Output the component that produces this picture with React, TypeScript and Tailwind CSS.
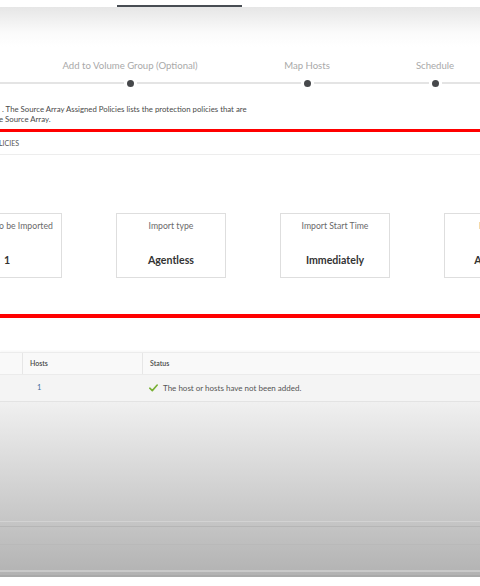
import type { ReactNode } from "react";

const STEPS = [
  { label: "Add to Volume Group (Optional)", width: "w-[180px]" },
  { label: "Map Hosts", width: "w-[174px]" },
  { label: "Schedule", width: "w-[82px]" },
];

const SUMMARY = [
  { title: "Volumes to be Imported", value: "1" },
  { title: "Import type", value: "Agentless" },
  { title: "Import Start Time", value: "Immediately" },
  { title: "Protection", value: "Automatic" },
];

function Line() {
  return <div className="h-[2px] flex-1 bg-[#e4e4e4]" />;
}

function Step(props: { label: string; width: string }) {
  return (
    <div className={`${props.width} flex shrink-0 flex-col`}>
      <div className="flex h-[16px] items-center justify-center whitespace-nowrap text-[9.6px] text-[#a9a9a9]">
        {props.label}
      </div>
      <div className="mt-[5px] flex h-[8px] items-center">
        <Line />
        <div className="mx-[3px] h-[7px] w-[7px] rounded-full bg-[#46484b]" />
        <Line />
      </div>
    </div>
  );
}

function Card(props: { title: string; value: string }) {
  return (
    <div className="flex h-[65px] w-[110px] shrink-0 flex-col items-center border border-[#dedede] bg-white">
      <div className="mt-[6px] whitespace-nowrap text-[8.7px] leading-[12px] text-[#6a6a6a]">{props.title}</div>
      <div className="mt-[21px] whitespace-nowrap text-[10.6px] font-bold leading-[14px] text-[#333]">{props.value}</div>
    </div>
  );
}

function Band(props: { className: string; children?: ReactNode }) {
  return <div className={props.className}>{props.children}</div>;
}

export default function App() {
  return (
    <div className="h-[586px] w-[480px] overflow-hidden bg-white font-['Lato',sans-serif]">
      {/* tab bar */}
      <div className="flex h-[7px] items-end">
        <div className="ml-[117px] h-[2px] w-[125px] bg-[#484d53]" />
      </div>

      <div className="bg-[linear-gradient(to_bottom,#e6e6e6_0px,#fbfbfb_26px,#ffffff_40px)] pt-[51px]">
        {/* stepper */}
        <div className="flex">
          <div className="flex w-[40px] shrink-0 flex-col">
            <div className="h-[16px]" />
            <div className="mt-[5px] flex h-[8px] items-center">
              <Line />
            </div>
          </div>
          {STEPS.map((s) => (
            <Step key={s.label} label={s.label} width={s.width} />
          ))}
          <div className="flex flex-1 flex-col">
            <div className="h-[16px]" />
            <div className="mt-[5px] flex h-[8px] items-center">
              <Line />
            </div>
          </div>
        </div>

        <div className="mt-[17px] text-[7.8px] leading-[10px] text-[#4a4a4a]">
          <div className="whitespace-nowrap pl-[2px]">. The Source Array Assigned Policies lists the protection policies that are</div>
          <div className="ml-[-1px] whitespace-nowrap">e Source Array.</div>
        </div>
      </div>

      <div className="mt-[5px] h-[3px] bg-[#ff0000]" />

      <div className="flex h-[23px] items-center border-b border-[#ededed] text-[7px] text-[#555]">
        <span className="ml-[-1px]">LICIES</span>
      </div>

      {/* summary cards */}
      <div className="mt-[58px] ml-[-48px] flex gap-[54px]">
        {SUMMARY.map((c) => (
          <Card key={c.title} title={c.title} value={c.value} />
        ))}
      </div>

      <div className="mt-[36px] h-[4px] bg-[#ff0000]" />

      {/* hosts table */}
      <div className="mt-[34px] border-t border-[#ececec] bg-[#f9f9f9] shadow-[0_-1px_2px_rgba(0,0,0,0.04)]">
        <div className="flex h-[22px] items-center border-b border-[#ebebeb] text-[7px] font-semibold text-[#4a4a4a]">
          <div className="h-full w-[23px] border-r border-[#e6e6e6]" />
          <div className="flex h-full w-[120px] items-center border-r border-[#e6e6e6] pl-[7px]">Hosts</div>
          <div className="pl-[7px]">Status</div>
        </div>
        <div className="flex h-[27px] items-center border-b border-[#e3e3e3] bg-[#f4f4f4]">
          <div className="w-[23px]" />
          <div className="w-[120px] pl-[14px] text-[7.5px] text-[#3f6d9c]">1</div>
          <div className="flex items-center pl-[6px] text-[8px] text-[#555]">
            <svg width="9" height="8" viewBox="0 0 9 8" className="mr-[5px]">
              <path d="M0.8 4.2 L3.3 6.6 L8.2 1" fill="none" stroke="#78b034" strokeWidth="1.6" strokeLinecap="round" strokeLinejoin="round" />
            </svg>
            The host or hosts have not been added.
          </div>
        </div>
      </div>

      {/* grey backdrop */}
      <div className="bg-[linear-gradient(to_bottom,#f0f0f0,#b2b2b2)]">
        <Band className="h-[120px] border-b border-[#d3d3d3]" />
        <Band className="h-[5px] border-b border-[#b6b6b6]" />
        <Band className="h-[18px] border-b border-[#b9b9b9]" />
        <Band className="h-[25px]" />
        <Band className="h-[2px] bg-[#c9c9c9]" />
        <Band className="h-[3px]" />
        <Band className="h-[2px] bg-[#a9a9a9]" />
      </div>
    </div>
  );
}
